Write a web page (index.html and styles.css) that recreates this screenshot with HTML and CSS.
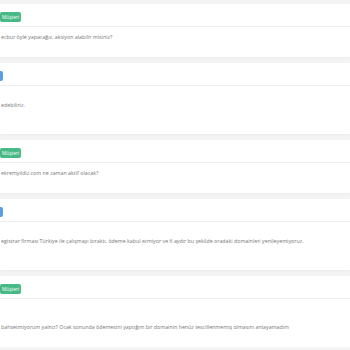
FILE: index.html
```html
<!DOCTYPE html>
<html lang="tr">
<head>
    <meta charset="UTF-8">
    <meta name="viewport" content="width=device-width, initial-scale=1.0">
    <title>Destek Talebi</title>
    <link rel="stylesheet" href="styles.css">
</head>
<body>

    <div class="thread">

        <div class="reply">
            <div class="reply-head">
                <span class="badge badge-client">Müşteri</span>
            </div>
            <div class="reply-body">
                <p>ecbur öyle yapacağız, aksiyon alabilir misiniz?</p>
            </div>
        </div>

        <div class="reply">
            <div class="reply-head">
                <span class="badge badge-staff"></span>
            </div>
            <div class="reply-body">
                <p><br>edebiliriz.<br><br></p>
            </div>
        </div>

        <div class="reply">
            <div class="reply-head">
                <span class="badge badge-client">Müşteri</span>
            </div>
            <div class="reply-body">
                <p>ekremyildiz.com ne zaman aktif olacak?</p>
            </div>
        </div>

        <div class="reply">
            <div class="reply-head">
                <span class="badge badge-staff"></span>
            </div>
            <div class="reply-body">
                <p><br>egistrar firması Türkiye ile çalışmayı bıraktı, ödeme kabul etmiyor ve 6 aydır bu şekilde oradaki domainleri yenileyemiyoruz.<br><br></p>
            </div>
        </div>

        <div class="reply">
            <div class="reply-head">
                <span class="badge badge-client">Müşteri</span>
            </div>
            <div class="reply-body">
                <p><br><br> bahsetmiyorum yalnız? Ocak sonunda ödemesini yaptığım bir domainin henüz tescillenmemiş olmasını anlayamadım</p>
            </div>
        </div>

    </div>

</body>
</html>
```

FILE: styles.css
```css
body {
    margin: 0;
    background-color: #f4f4f4;
    font-family: "Open Sans", Arial, sans-serif;
    color: #777;
    overflow: hidden;
}

.thread {
    display: flex;
    flex-direction: column;
    gap: 6px;
    padding-top: 4px;
}

.reply {
    background: white;
    box-shadow: 0 1px 3px rgba(0, 0, 0, 0.04);
}

.reply-head {
    display: flex;
    padding: 8px 0 4px;
    border-bottom: 1px solid #eeeeee;
}

.badge {
    display: inline-block;
    height: 10px;
    line-height: 10px;
    padding: 0 2px;
    font-size: 4.8px;
    color: white;
    border-radius: 2px;
}

.badge-client {
    background: #47b984;
}

/* staff badge sits mostly outside the visible area */
.badge-staff {
    background: #5b9fe6;
    width: 18px;
    margin-left: -19px;
}

.reply-body {
    padding: 6px 0 15px 1px;
}

.reply-body p {
    margin: 0;
    font-size: 5.3px;
    line-height: 9px;
    white-space: nowrap;
}
```
